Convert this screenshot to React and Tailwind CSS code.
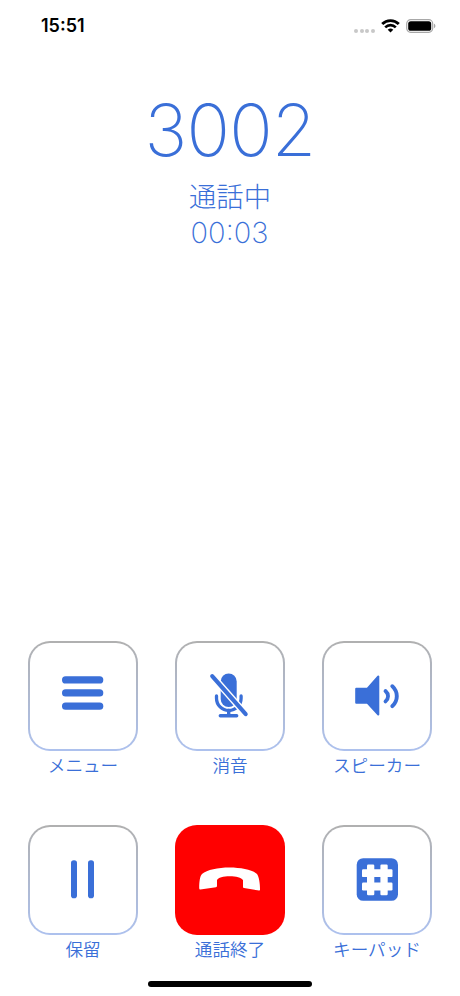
import React from "react";

const StatusBar = () => {
  return (
    <header className="flex h-[52px] items-center justify-between pl-[41px] pr-6">
      <span className="font-['Inter'] text-[18px] font-semibold leading-5 text-black">
        15:51
      </span>
      <div className="flex items-center">
        {/* Signal dots */}
        <div className="mt-[9px] mr-[6px] flex gap-[1.6px]">
          <span className="h-1 w-1 rounded-full bg-[#c8c8c8]" />
          <span className="h-1 w-1 rounded-full bg-[#c8c8c8]" />
          <span className="h-1 w-1 rounded-full bg-[#c8c8c8]" />
          <span className="h-1 w-1 rounded-full bg-[#c8c8c8]" />
        </div>
        {/* Wifi */}
        <svg className="mr-[6px]" width="19" height="14" viewBox="0 0 19 14" fill="none">
          <path d="M1.2 5a11.8 11.8 0 0 1 16.6 0" stroke="#000" strokeWidth="2.9" />
          <path d="M4.2 8.3a7.5 7.5 0 0 1 10.6 0" stroke="#000" strokeWidth="2.6" />
          <path d="M9.5 13.4 6.7 10.8a4 4 0 0 1 5.6 0Z" fill="#000" />
        </svg>
        {/* Battery */}
        <svg className="-mt-px" width="30" height="14" viewBox="0 0 30 14" fill="none">
          <rect x="0.7" y="0.7" width="26" height="12.6" rx="4" stroke="#a8a8a8" strokeWidth="1.2" />
          <rect x="2.2" y="2.2" width="23" height="9.6" rx="2.6" fill="#000" />
          <path d="M28 4.8v4.4c.9-.4 1.4-1.2 1.4-2.2S28.9 5.2 28 4.8Z" fill="#a8a8a8" />
        </svg>
      </div>
    </header>
  );
};

const MenuIcon = () => (
  <svg className="h-[110px] w-[110px]" viewBox="0 0 110 110" fill="#3a6fd8">
    <rect x="34" y="35.2" width="41.3" height="7.3" rx="3.6" />
    <rect x="34" y="48.3" width="41.3" height="7.3" rx="3.6" />
    <rect x="34" y="61.5" width="41.3" height="7.3" rx="3.6" />
  </svg>
);

const MuteIcon = () => (
  <svg className="h-[110px] w-[110px]" viewBox="0 0.5 110 110" fill="none" strokeLinecap="round">
    <rect x="45.7" y="33" width="16" height="33.5" rx="8" fill="#3a6fd8" />
    <path d="M41.5 55.500v2.200a12.3 12.3 0 0 0 24.6 0v-2.200" stroke="#3a6fd8" strokeWidth="3.3" />
    <path d="M53.7 70v5M45.3 75.3h16.4" stroke="#3a6fd8" strokeWidth="3.4" />
    <path d="M35 33 73 76.2" stroke="#fff" strokeWidth="7" strokeLinecap="butt" />
    <path d="M37.2 35.6 70.7 73.7" stroke="#3a6fd8" strokeWidth="4.1" />
  </svg>
);

const SpeakerIcon = () => (
  <svg className="h-[110px] w-[110px]" viewBox="0 0.5 110 110" fill="none" strokeLinecap="round">
    <path
      d="M34.2 48.2h11.3L56.3 36v38L45.5 62.2H34.2Z"
      fill="#3a6fd8"
      stroke="#3a6fd8"
      strokeWidth="2"
      strokeLinejoin="round"
    />
    <path d="M63.5 50.5c3.4 3 3.4 7.4 0 10.4" stroke="#3a6fd8" strokeWidth="3.8" />
    <path d="M70.3 45.7c6 5.8 6 14.2 0 20" stroke="#3a6fd8" strokeWidth="3.9" />
  </svg>
);

const HoldIcon = () => (
  <svg className="h-[110px] w-[110px]" viewBox="0 0 110 110" fill="#3a6fd8">
    <rect x="43" y="35.2" width="6" height="38" rx="2.8" />
    <rect x="60" y="35.2" width="6" height="38" rx="2.8" />
  </svg>
);

const EndCallIcon = () => (
  <svg className="h-[110px] w-[110px]" viewBox="0 0.5 110 110" fill="#fff">
    <path d="M24.2 63.5C24.2 57 25 51.5 27 49.5 32 45.500 43 43.1 54.5 43.1S77.5 45.500 82 49.500C84 52 85 59 85 65.300Q85 66.1 84 65.9L69 63.6Q68 63.4 68 62.4V55.8C66.5 53 61 51.8 54.7 51.8S43 53 42 55.8V61.6Q42 62.6 41 62.8L25.3 65.1Q24.2 65.2 24.2 63.5Z" />
  </svg>
);

const KeypadIcon = () => (
  <svg className="h-[110px] w-[110px]" viewBox="0 0.4 110 110">
    <rect x="34.7" y="33.6" width="41.3" height="42.6" rx="6.5" fill="#3a6fd8" />
    <g fill="#fff">
      <rect x="45" y="40" width="7.3" height="30.7" rx="1.2" />
      <rect x="58.4" y="40" width="7.3" height="30.7" rx="1.2" />
      <rect x="40" y="44.7" width="30.5" height="7.8" rx="1.2" />
      <rect x="40" y="58" width="30.5" height="7.8" rx="1.2" />
    </g>
  </svg>
);

const BUTTONS = [
  { id: "menu", label: "メニュー", icon: MenuIcon },
  { id: "mute", label: "消音", icon: MuteIcon },
  { id: "speaker", label: "スピーカー", icon: SpeakerIcon },
  { id: "hold", label: "保留", icon: HoldIcon },
  { id: "end", label: "通話終了", icon: EndCallIcon, danger: true },
  { id: "keypad", label: "キーパッド", icon: KeypadIcon },
];

const CallButton = ({ label, icon: Icon, danger }) => {
  return (
    <button className="flex w-[110px] flex-col items-center">
      <span
        className={`block h-[110px] w-[110px] rounded-[22px] p-[2px] ${
          danger ? "bg-[#ff0000]" : "bg-linear-to-b from-[#b0b0b0] to-[#adc1ee]"
        }`}
      >
        <span
          className={`flex h-[106px] w-[106px] items-center justify-center rounded-[20px] ${
            danger ? "" : "bg-white"
          }`}
        >
          <span className="block shrink-0">
            <Icon />
          </span>
        </span>
      </span>
      <span className="mt-[3px] whitespace-nowrap text-[17.6px] font-[350] leading-6">
        {label}
      </span>
    </button>
  );
};

const App = () => {
  return (
    <div className="flex h-[996px] w-[460px] flex-col bg-white font-['Inter','Noto_Sans_CJK_JP',sans-serif] text-[#3a6fd8]">
      <StatusBar />

      {/* Caller info */}
      <div className="mt-[33px] flex flex-col items-center">
        <h1 className="text-[72px] font-[150] leading-[90px] tracking-[-0.8px]">3002</h1>
        <p className="mt-[5px] text-[27.3px] font-light leading-9">通話中</p>
        <p className="-mt-px pr-px text-[29px] font-[150] leading-9">00:03</p>
      </div>

      {/* Call controls */}
      <div className="mt-auto grid grid-cols-3 gap-x-[37px] gap-y-[47px] px-7">
        {BUTTONS.map((button) => (
          <CallButton key={button.id} {...button} />
        ))}
      </div>

      {/* Home indicator */}
      <div className="mx-auto mt-[19px] mb-[9px] h-[6px] w-[164px] rounded-full bg-black" />
    </div>
  );
};

export default App;
